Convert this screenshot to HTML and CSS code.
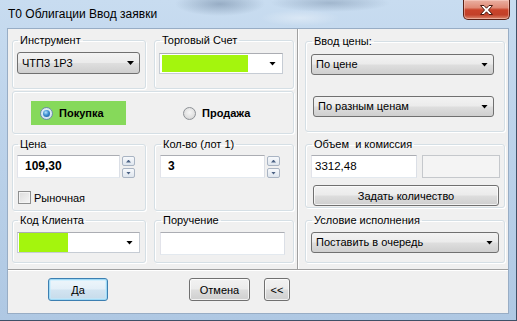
FILE: index.html
```html
<!DOCTYPE html>
<html lang="ru">
<head>
<meta charset="utf-8">
<title>T0 Облигации Ввод заявки</title>
<link rel="stylesheet" href="styles.css">
</head>
<body>
<div class="window">
  <div class="titlebar">
    <div class="title">T0 Облигации Ввод заявки</div>
    <div class="close">
      <svg width="13" height="10" viewBox="0 0 13 10"><polygon points="0.5,0.5 4,0.5 6.5,3.2 9,0.5 12.5,0.5 8.5,5 12.5,9.5 9,9.5 6.5,6.8 4,9.5 0.5,9.5 4.5,5" fill="#fff" stroke="#4a1a10" stroke-width="1" stroke-linejoin="round"/></svg>
    </div>
  </div>
  <div class="client">
    <div class="main">
      <div class="left">
        <fieldset class="group g-top"><legend>Инструмент</legend>
          <div class="combo c-instr"><span class="ctext">ЧТП3 1Р3</span><span class="arrow"></span></div>
        </fieldset>
        <fieldset class="group g-top"><legend>Торговый Счет</legend>
          <div class="ecombo c-acc"><span class="fill f-acc"></span><span class="arrow"></span></div>
        </fieldset>
        <div class="g-side">
          <div class="radio buy"><span class="rb on"></span><span class="rtext">Покупка</span></div>
          <div class="radio sell"><span class="rb"></span><span class="rtext">Продажа</span></div>
        </div>
        <fieldset class="group g-mid"><legend>Цена</legend>
          <div class="numrow">
            <div class="input num w-price">109,30</div>
            <div class="spin"><span class="sb up"></span><span class="sb down"></span></div>
          </div>
          <div class="check"><span class="cb"></span><span>Рыночная</span></div>
        </fieldset>
        <fieldset class="group g-mid g-qty"><legend>Кол-во (лот 1)</legend>
          <div class="numrow">
            <div class="input num w-qty">3</div>
            <div class="spin"><span class="sb up"></span><span class="sb down"></span></div>
          </div>
        </fieldset>
        <fieldset class="group g-bot"><legend>Код Клиента</legend>
          <div class="ecombo c-client"><span class="fill f-client"></span><span class="arrow"></span></div>
        </fieldset>
        <fieldset class="group g-bot g-order"><legend>Поручение</legend>
          <div class="input w-order"></div>
        </fieldset>
      </div>
      <div class="right">
        <fieldset class="group r-mode"><legend>Ввод цены:</legend>
          <div class="combo c-mode1"><span class="ctext">По цене</span><span class="arrow"></span></div>
          <div class="combo c-mode2"><span class="ctext">По разным ценам</span><span class="arrow"></span></div>
        </fieldset>
        <fieldset class="group r-vol"><legend>Объем &nbsp;и комиссия</legend>
          <div class="volrow">
            <div class="input w-vol">3312,48</div>
            <div class="input disabled w-fee"></div>
          </div>
          <div class="btn w-set">Задать количество</div>
        </fieldset>
        <fieldset class="group r-cond"><legend>Условие исполнения</legend>
          <div class="combo c-cond"><span class="ctext">Поставить в очередь</span><span class="arrow"></span></div>
        </fieldset>
      </div>
    </div>
    <div class="footer">
      <div class="btn default b-yes">Да</div>
      <div class="btn b-cancel">Отмена</div>
      <div class="btn b-back">&lt;&lt;</div>
    </div>
  </div>
</div>
</body>
</html>
```

FILE: styles.css
```css
* { box-sizing: border-box; }
html, body { margin: 0; padding: 0; }
body {
  width: 517px; height: 321px; overflow: hidden;
  background: #a9c3df;
  font-family: "Liberation Sans", Arial, sans-serif;
  font-size: 11px; color: #000;
}

.window {
  width: 517px; height: 321px;
  display: flex; flex-direction: column;
  padding: 0 7px 6px 7px;
  background:
    radial-gradient(ellipse 45px 12px at 220px 4px, rgba(60, 85, 115, .35), transparent),
    radial-gradient(ellipse 60px 9px at 330px 3px, rgba(60, 85, 115, .28), transparent),
    radial-gradient(ellipse 40px 8px at 300px 18px, rgba(255, 255, 255, .35), transparent),
    linear-gradient(180deg, #c8dcf0 0%, #bed4eb 35%, #afc8e3 100%);
  border-right: 1px solid #3f5067;
  border-bottom: 1px solid #3f5067;
}

.titlebar { height: 28px; display: flex; align-items: flex-start; flex: none; }
.title {
  padding: 7px 0 0 1px;
  font-size: 12px; line-height: 15px; color: #000;
}
.close {
  margin-left: auto; margin-right: -1px;
  width: 47px; height: 20px;
  border: 1px solid #5a2116; border-top: none;
  border-radius: 0 0 5px 5px;
  background: linear-gradient(180deg, #eab0a2 0%, #e08a76 40%, #c9432a 52%, #c24029 78%, #dc8a70 100%);
  box-shadow: inset 0 0 0 1px rgba(255, 220, 210, .45);
  display: flex; align-items: center; justify-content: center;
}
.close svg { display: block; margin-top: 1px; }

.client {
  flex: 1;
  border: 1px solid #98adc5;
  background: #f0f0f0;
  display: flex; flex-direction: column;
}
.main {
  height: 241px; flex: none;
  border-bottom: 1px solid #a0a0a0;
  display: grid; grid-template-columns: 289px 1fr;
}
.footer {
  flex: 1;
  border-top: 1px solid #fff;
  display: flex; align-items: flex-start;
  padding: 7px 0 0 40px;
}

/* group boxes */
.group {
  margin: 0; min-width: 0;
  padding: 0 4px 0 4px;
  border: 1px solid #d5dfe5; border-radius: 3px;
  box-shadow: inset 1px 1px 0 #fff, 1px 1px 0 #fff;
}
.group legend {
  padding: 0 2px; margin-left: 1px;
  line-height: 13px; font-size: 11px;
}

.left {
  padding: 5px 0 0 4px;
  display: grid; grid-template-columns: 134px 140px; column-gap: 8px;
  align-content: start;
}
.g-top { height: 55px; }
.g-mid { height: 73px; margin-top: 4px; }
.g-bot { height: 49px; margin-top: 3px; }
.g-qty, .g-order { padding-left: 5px; }

.g-side {
  grid-column: 1 / -1;
  height: 43px; margin-top: 2px;
  border: 1px solid #d5dfe5; border-radius: 3px;
  box-shadow: inset 1px 1px 0 #fff, 1px 1px 0 #fff;
  display: flex; align-items: center;
  padding: 0 0 0 18px;
}
.radio { display: flex; align-items: center; font-weight: bold; font-size: 11px; }
.radio .rtext { margin-left: 6px; }
.buy { background: #86d95a; width: 95px; height: 24px; padding-left: 9px; margin-top: 1px; }
.sell { margin-left: 57px; margin-top: 1px; }
.rb {
  width: 13px; height: 13px; border-radius: 50%;
  border: 1px solid #8d9196;
  background: radial-gradient(circle at 50% 40%, #f6f6f6 0%, #e0e0e0 60%, #c9c9c9 100%);
  display: flex; align-items: center; justify-content: center;
  flex: none;
}
.rb.on { border-color: #6e8cab; background: radial-gradient(circle at 50% 40%, #e9f4fb, #c6dcec); }
.rb.on::after {
  content: ""; width: 7px; height: 7px; border-radius: 50%;
  background: radial-gradient(circle at 40% 35%, #b6e3fb 0%, #3d8ed2 45%, #134f8a 100%);
}

/* combos */
.combo {
  height: 21px; margin-top: 5px;
  border: 1px solid #707070; border-radius: 3px;
  background: linear-gradient(180deg, #f3f3f3 0%, #ebebeb 48%, #dedede 52%, #cfcfcf 100%);
  display: flex; align-items: center;
  padding: 0 5px 0 4px;
}
.combo .ctext { flex: 1; line-height: 19px; white-space: nowrap; }
.arrow {
  width: 7px; height: 4px; background: #000; flex: none;
  clip-path: polygon(0 0, 100% 0, 50% 100%);
}
.c-instr { width: 123px; height: 22px; margin-left: 0; }
.ecombo {
  height: 21px; margin-top: 5px;
  border: 1px solid #c6ccd4; border-top-color: #abadb3;
  background: #fff;
  display: flex; align-items: center;
  padding: 1px 6px 1px 2px;
}
.ecombo .fill { height: 17px; background: #a4f50d; }
.ecombo .arrow { margin-left: auto; }
.c-acc { width: 124px; margin-top: 6px; }
.f-acc { width: 86px; }
.c-client { width: 123px; margin-top: 5px; padding-left: 1px; }
.f-client { width: 49px; height: 19px !important; }

/* inputs */
.input {
  height: 23px; background: #fff;
  border: 1px solid; border-color: #abadb3 #dbdfe6 #e3e9ef #e2e3ea;
  padding: 0 3px; line-height: 21px; white-space: nowrap;
}
.input.num { font-weight: bold; font-size: 12px; padding-left: 7px; }
.numrow { display: flex; margin-top: 4px; gap: 2px; align-items: flex-start; }
.w-price { width: 103px; }
.w-qty { width: 105px; }
.w-order { width: 125px; margin-top: 5px; }
.spin { display: flex; flex-direction: column; gap: 2px; padding-top: 1px; }
.sb {
  width: 13px; height: 10px;
  border: 1px solid #a9b4c3; border-radius: 2px;
  background: linear-gradient(180deg, #f7f9fc, #dfe6ee);
  display: flex; align-items: center; justify-content: center;
}
.sb::after {
  content: ""; width: 5px; height: 3px; background: #4b6284;
}
.sb.up::after { clip-path: polygon(50% 0, 100% 100%, 0 100%); }
.sb.down::after { clip-path: polygon(0 0, 100% 0, 50% 100%); }

.check { display: flex; align-items: center; margin-top: 13px; margin-left: 1px; }
.cb {
  width: 13px; height: 13px; margin-right: 3px;
  border: 1px solid #8e8f8f;
  background: linear-gradient(135deg, #dcdcdc, #f5f5f5);
  box-shadow: inset 0 0 0 1px #f4f4f4;
}

/* right panel */
.right {
  border-left: 1px solid #a0a0a0;
  box-shadow: inset 1px 0 0 #fff;
  padding: 0 4px 0 7px;
  display: flex; flex-direction: column;
}
.right .group { padding-left: 5px; }
.r-mode { height: 97px; margin-top: 6px; }
.r-vol { height: 70px; margin-top: 6px; }
.r-cond { height: 49px; margin-top: 6px; }
.c-mode1 { width: 183px; margin-top: 6px; }
.c-mode2 { width: 181px; margin-top: 21px; margin-left: 2px; }
.c-cond { width: 188px; margin-top: 5px; }
.volrow { display: flex; gap: 5px; margin-top: 4px; }
.w-vol { width: 106px; font-size: 11.5px; }
.w-fee { width: 78px; }
.input.disabled { background: #f4f4f4; border-color: #c5c8cc; }

/* buttons */
.btn {
  height: 23px;
  border: 1px solid #707070; border-radius: 3px;
  background: linear-gradient(180deg, #f2f2f2 0%, #ebebeb 48%, #dddddd 52%, #cfcfcf 100%);
  box-shadow: inset 0 0 0 1px rgba(255, 255, 255, .7);
  display: flex; align-items: center; justify-content: center;
  white-space: nowrap;
}
.w-set { width: 186px; height: 21px; margin-top: 7px; margin-left: 2px; }
.btn.default {
  border-color: #3c7fb1;
  box-shadow: inset 0 0 0 1px #9fd9f5, inset 0 0 0 2px rgba(190, 235, 255, .5);
  background: linear-gradient(180deg, #eef6fb 0%, #e3eff8 48%, #d2e4f1 52%, #c6dbea 100%);
}
.b-yes { width: 60px; }
.b-cancel { width: 61px; margin-left: 81px; }
.b-back { width: 26px; margin-left: 14px; }
```
